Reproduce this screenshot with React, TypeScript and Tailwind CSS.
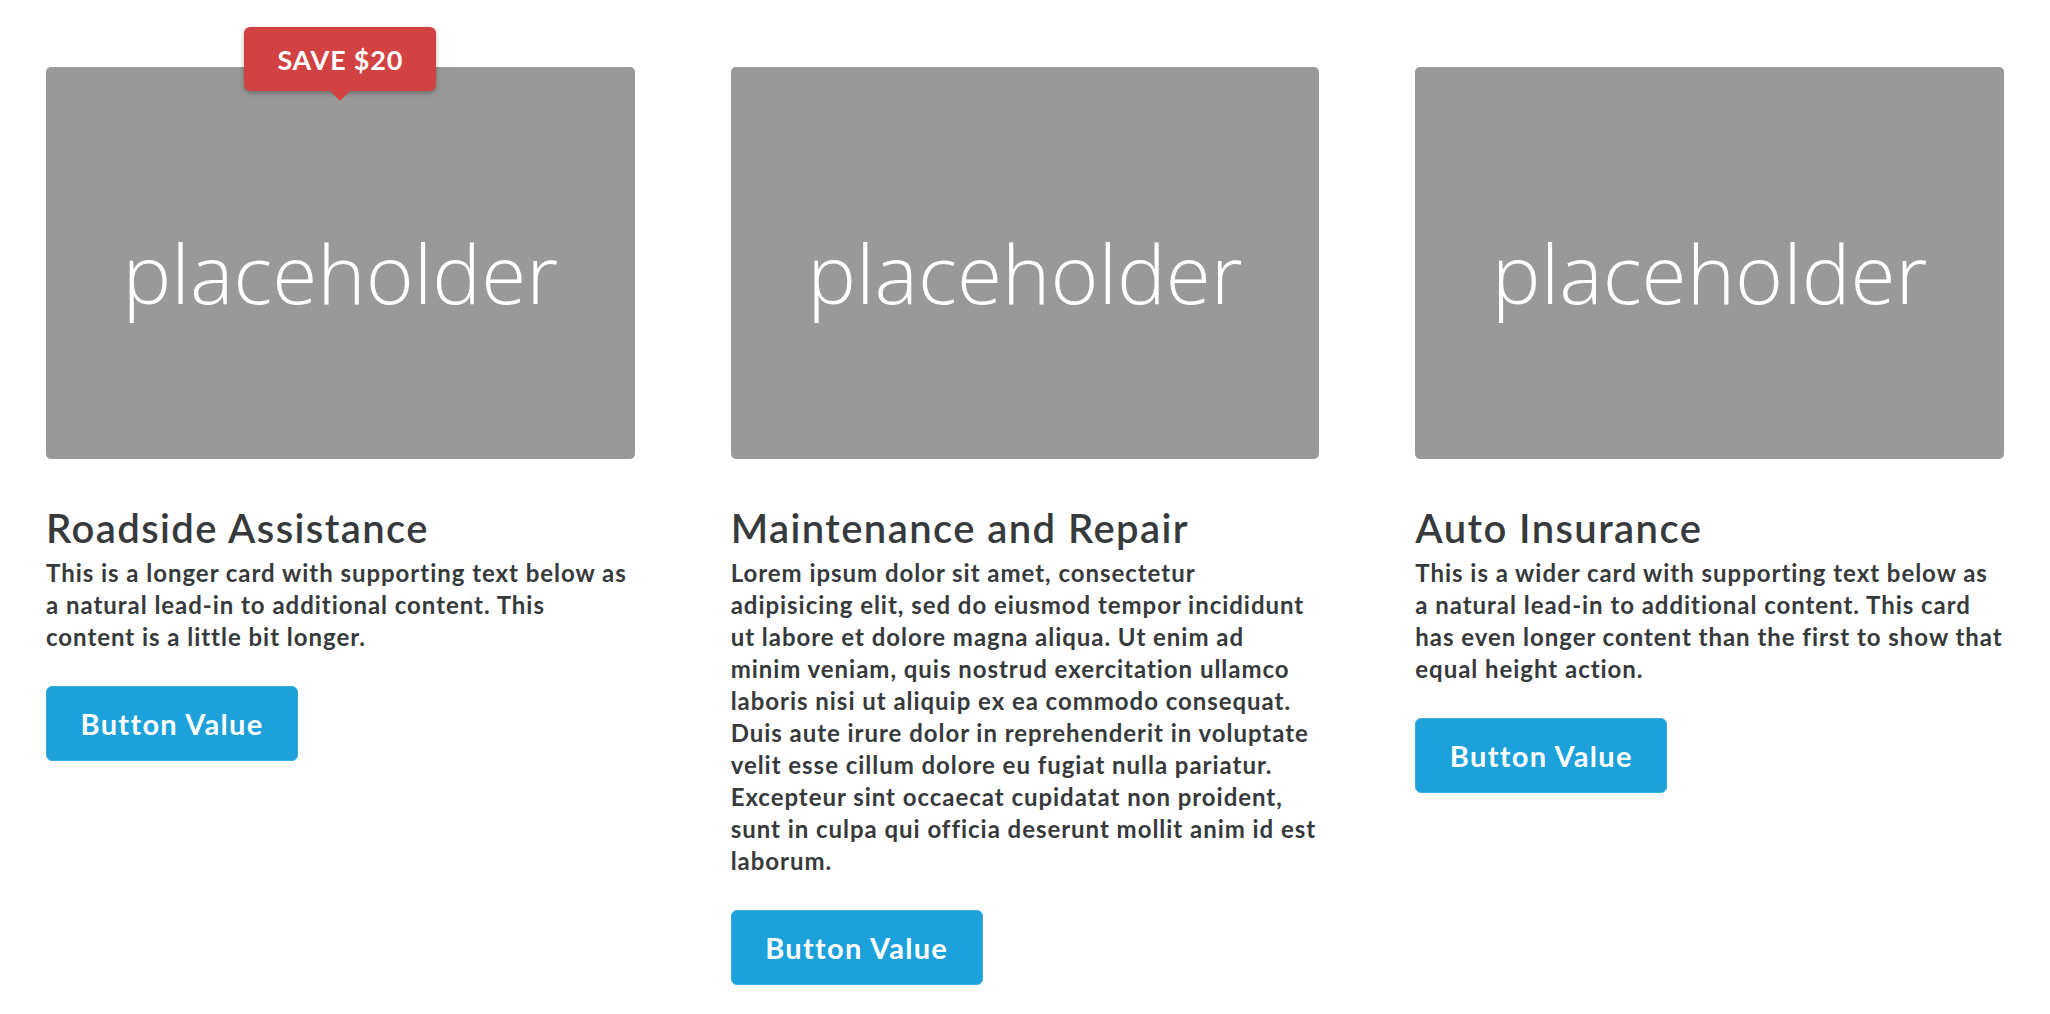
import React from "react";

type Card = { title: string; text: string; badge?: string };

const cards: Card[] = [
  {
    title: "Roadside Assistance",
    text: "This is a longer card with supporting text below as a natural lead-in to additional content. This content is a little bit longer.",
    badge: "SAVE $20",
  },
  {
    title: "Maintenance and Repair",
    text: "Lorem ipsum dolor sit amet, consectetur adipisicing elit, sed do eiusmod tempor incididunt ut labore et dolore magna aliqua. Ut enim ad minim veniam, quis nostrud exercitation ullamco laboris nisi ut aliquip ex ea commodo consequat. Duis aute irure dolor in reprehenderit in voluptate velit esse cillum dolore eu fugiat nulla pariatur. Excepteur sint occaecat cupidatat non proident, sunt in culpa qui officia deserunt mollit anim id est laborum.",
  },
  {
    title: "Auto Insurance",
    text: "This is a wider card with supporting text below as a natural lead-in to additional content. This card has even longer content than the first to show that equal height action.",
  },
];

function CardView({ card }: { card: Card }) {
  return (
    <div className="flex flex-col items-start">
      <div className="relative w-full">
        <div className="flex h-[392px] w-full items-center justify-center rounded-[5px] bg-[#999999] pt-[18px]">
          <span className="font-['Open_Sans',sans-serif] text-[82px] font-light leading-none text-white">
            placeholder
          </span>
        </div>
        {card.badge && (
          <div className="absolute left-1/2 top-[-40px] -translate-x-1/2">
            <div className="flex h-[64px] w-[192px] items-center justify-center rounded-[6px] bg-[#d24242] shadow-[0_2px_5px_rgba(0,0,0,0.3)]">
              <span className="font-['Lato',sans-serif] text-[27px] font-bold leading-none tracking-[0.8px] text-white">
                {card.badge}
              </span>
            </div>
            <div className="mx-auto h-0 w-0 border-x-[10px] border-t-[10px] border-x-transparent border-t-[#d24242]" />
          </div>
        )}
      </div>
      <h2 className="mt-[47px] mb-[7px] font-['Lato',sans-serif] text-[40px] font-semibold leading-[44px] tracking-[1.4px] text-[#373a3c]">
        {card.title}
      </h2>
      <p className="font-['Lato',sans-serif] text-[24px] font-bold leading-[32px] tracking-[0.96px] text-[#373a3c]">
        {card.text}
      </p>
      <button className="mt-[33px] flex h-[75px] w-[252px] items-center justify-center rounded-[6px] border border-[#3aaee2] bg-[#1ca1db] font-['Lato',sans-serif] text-[29px] font-bold tracking-[1.3px] text-white">
        Button Value
      </button>
    </div>
  );
}

export default function App() {
  return (
    <div className="min-h-[1014px] w-full bg-white">
      <div className="grid grid-cols-3 items-start gap-x-[96px] px-[46px] pt-[67px]">
        {cards.map((c) => (
          <CardView key={c.title} card={c} />
        ))}
      </div>
    </div>
  );
}
